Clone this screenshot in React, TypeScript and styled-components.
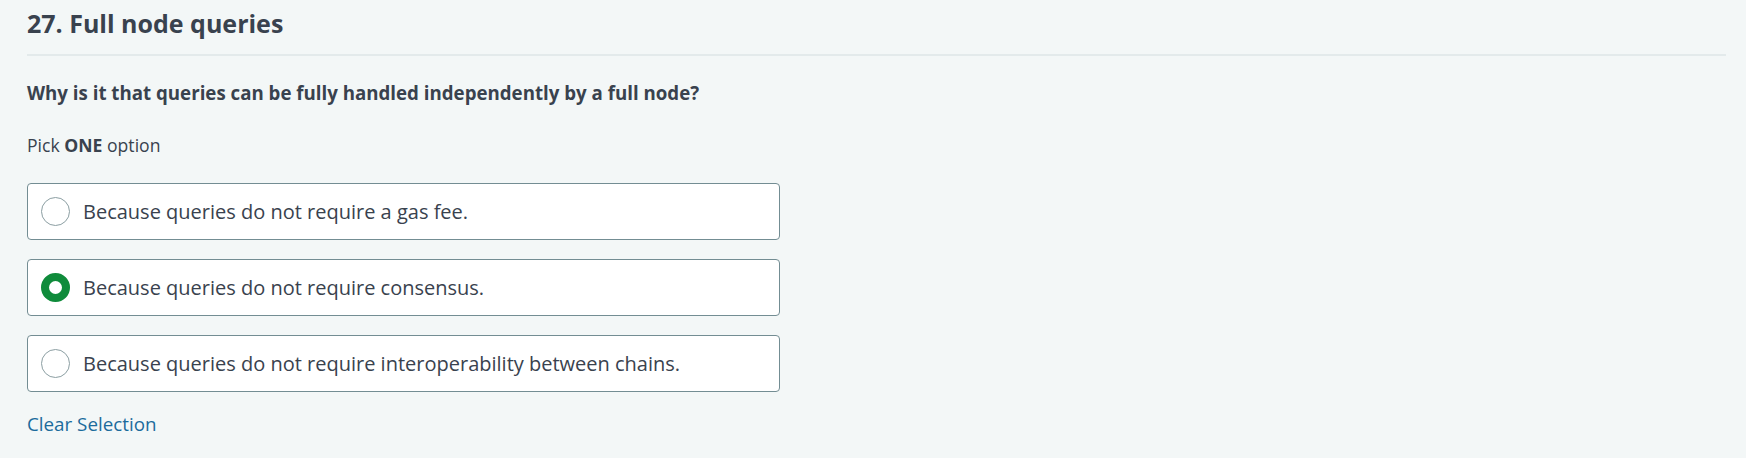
import React, { useState } from "react";
import styled, { createGlobalStyle } from "styled-components";

const Global = createGlobalStyle`
  html, body { margin: 0; padding: 0; background: #f3f7f7; }
  body { font-family: "Open Sans", "Noto Sans", sans-serif; color: #39424e; }
`;

const Page = styled.div`
  padding: 6px 20px 0 27px;
`;

const Title = styled.h2`
  margin: 0;
  font-size: 25px;
  line-height: 34px;
  font-weight: 700;
  color: #39424e;
  padding-bottom: 14px;
  border-bottom: 2px solid #e3eaeb;
`;

const Question = styled.p`
  margin: 23px 0 0;
  font-size: 18.7px;
  line-height: 28px;
  font-weight: 700;
`;

const Hint = styled.p`
  margin: 26px 0 0;
  font-size: 17.6px;
  line-height: 24px;
  b { font-weight: 700; }
`;

const Options = styled.div`
  margin-top: 26px;
  width: 753px;
  display: flex;
  flex-direction: column;
  gap: 19px;
`;

const Option = styled.label`
  display: flex;
  align-items: center;
  gap: 13px;
  height: 57px;
  box-sizing: border-box;
  padding: 0 13px;
  background: #fff;
  border: 1px solid #738d93;
  border-radius: 4px;
  cursor: pointer;
  font-size: 20px;
`;

const Radio = styled.span<{ $checked: boolean }>`
  flex: none;
  width: 29px;
  height: 29px;
  box-sizing: border-box;
  border-radius: 50%;
  background: #fff;
  border: ${(p) => (p.$checked ? "8px solid #0f8b3b" : "1px solid #8b9ea2")};
`;

const Clear = styled.button`
  display: block;
  margin-top: 19px;
  padding: 0;
  border: 0;
  background: none;
  font-family: inherit;
  font-size: 18.8px;
  line-height: 26px;
  color: #1b6b9c;
  cursor: pointer;
`;

const options = [
  "Because queries do not require a gas fee.",
  "Because queries do not require consensus.",
  "Because queries do not require interoperability between chains.",
];

export default function App() {
  const [sel, setSel] = useState<number | null>(1);
  return (
    <Page>
      <Global />
      <Title>27. Full node queries</Title>
      <Question>Why is it that queries can be fully handled independently by a full node?</Question>
      <Hint>
        Pick <b>ONE</b> option
      </Hint>
      <Options>
        {options.map((o, i) => (
          <Option key={o} onClick={() => setSel(i)}>
            <Radio $checked={sel === i} />
            {o}
          </Option>
        ))}
      </Options>
      <Clear onClick={() => setSel(null)}>Clear Selection</Clear>
    </Page>
  );
}
